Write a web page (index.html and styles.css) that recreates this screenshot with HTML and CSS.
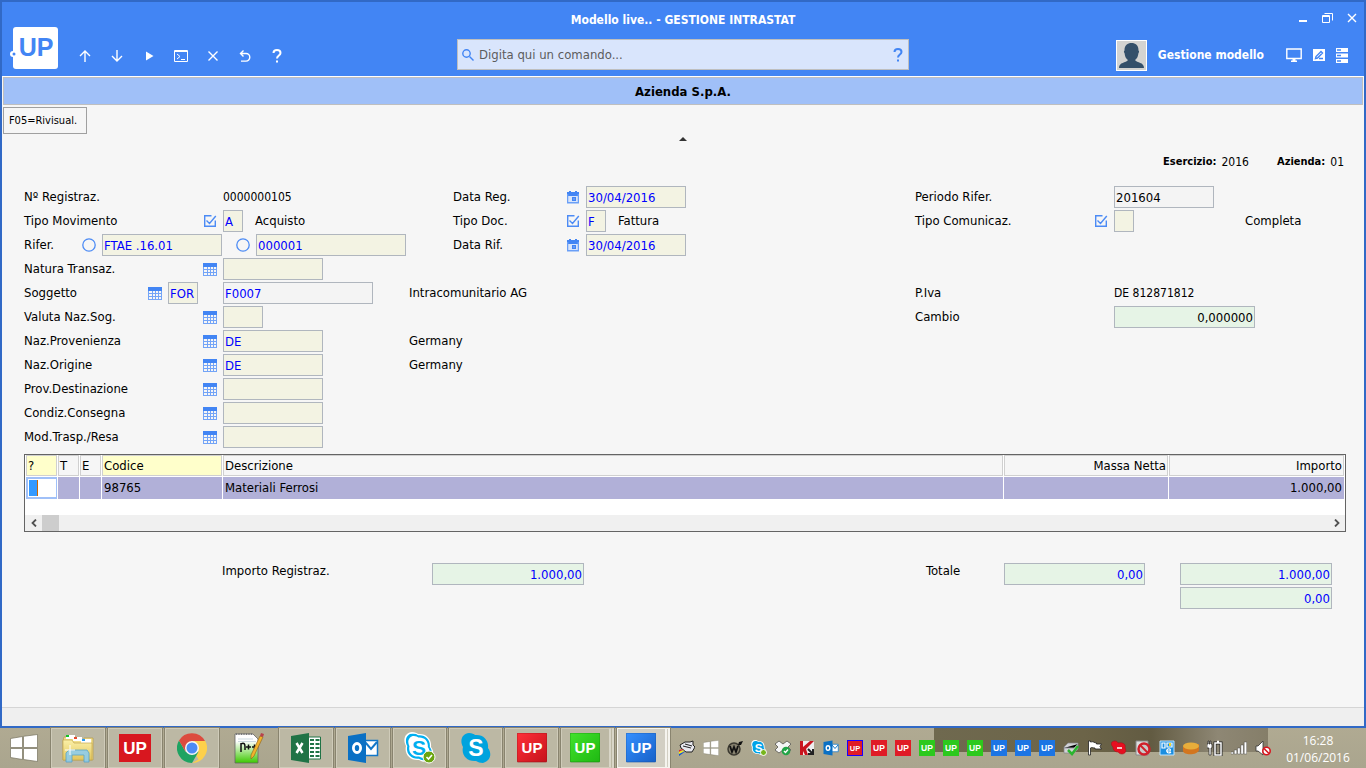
FILE: index.html
```html
<!DOCTYPE html>
<html lang="it">
<head>
<meta charset="utf-8">
<meta name="viewport" content="width=device-width, initial-scale=1">
<title>Modello live.. - GESTIONE INTRASTAT</title>
<link rel="stylesheet" href="styles.css">
</head>
<body>
<svg class="defs" aria-hidden="true">
  <symbol id="grid" viewBox="0 0 14 14"><path fill="#4285f4" d="M0 1h14v4H0z"/><path fill="#73a4f7" d="M0 5h14v9H0z"/><path fill="#f6f6f6" d="M1 5h3v2H1zM5 5h2v2H5zM8 5h2v2H8zM11 5h2v2h-2zM1 8h3v2H1zM5 8h2v2H5zM8 8h2v2H8zM11 8h2v2h-2zM1 11h3v2H1zM5 11h2v2H5zM8 11h2v2H8zM11 11h2v2h-2z"/></symbol>
  <symbol id="check" viewBox="0 0 14 14"><path fill="none" stroke="#4c8bf5" stroke-width="1.4" d="M8.500 1.700H1.700v10.600h10.600V6.500M3.500 6.500l3 3L12.800 2"/></symbol>
  <symbol id="ring" viewBox="0 0 14 14"><circle cx="7" cy="7" r="6.200" fill="none" stroke="#4c8bf5" stroke-width="1.300"/></symbol>
  <symbol id="cal" viewBox="0 0 14 14"><path fill="#4285f4" d="M1 2h2V1h2v1h4V1h2v1h2v4H1z"/><path fill="none" stroke="#6a9ff7" stroke-width="1.400" d="M1.700 4v8.800h10.600V4"/><path fill="#d8e5fb" d="M3 6h8v6H3z"/><path fill="#4285f4" d="M6 7h4v4H6z"/><path fill="#cfe0fb" d="M7.500 8.500h1v1h-1z"/></symbol>
  <symbol id="win" viewBox="0 0 28 28"><path fill="#fff" stroke="#77735f" stroke-width=".7" d="M.5 4.500 12.500 2.500v11H.5zM13.500 2.300 27.500.5v13h-14zM.5 14.500h12v11L.5 23.500zM13.500 14.500h14v13l-14-2z"/></symbol>
  <symbol id="outlook" viewBox="0 0 32 32"><path fill="#fff" stroke="#1277c8" stroke-width="1.500" d="M17 8.500h13.500v15H17z"/><path fill="none" stroke="#1277c8" stroke-width="2" d="m18 10 6 7 6-7"/><path fill="#0a70c4" d="M1 4 19 1v30L1 28z"/><ellipse cx="10" cy="16" rx="3.600" ry="4.500" fill="none" stroke="#fff" stroke-width="2.800"/></symbol>
  <symbol id="skypeShape" viewBox="0 0 30 30"><path d="M8 0c3 0 5 1 6 2 8-1 14 5 13 13 4 5 3 13-5 15-3 0-5-1-7-2C6 29 0 22 2 14-2 7 2 0 8 0z"/></symbol>
  <linearGradient id="redG" x2="1" y2="1"><stop stop-color="#ff3038"/><stop offset="1" stop-color="#c6121c"/></linearGradient>
  <linearGradient id="greenG" x2="1" y2="1"><stop stop-color="#42e32c"/><stop offset="1" stop-color="#1fb812"/></linearGradient>
  <linearGradient id="blueG" x2="1" y2="1"><stop stop-color="#3590ff"/><stop offset="1" stop-color="#1761c8"/></linearGradient>
  <linearGradient id="noteG" x2="0" y2="1"><stop offset=".25" stop-color="#fff"/><stop offset="1" stop-color="#3cc800"/></linearGradient>
  <linearGradient id="foldG" x2="0" y2="1"><stop stop-color="#fbf0a8"/><stop offset="1" stop-color="#e2c55c"/></linearGradient>
</svg>

<div class="window">
  <header class="header">
    <div class="header-left">
      <svg class="logo" viewBox="0 0 49 43" role="img" aria-label="UP"><rect x="3" y="1" width="45" height="42" rx="3"/><circle cx="3" cy="28" r="3"/><circle cx="4" cy="28" r="1.500"/><text x="26" y="30" class="logo-text">UP</text></svg>
      <nav class="tools">
        <button aria-label="Su"><svg width="12" height="12" viewBox="0 0 12 12"><path d="M6 12V1M1 6l5-5 5 5"/></svg></button>
        <button aria-label="Giù"><svg width="12" height="12" viewBox="0 0 12 12"><path d="M6 0v11M1 6l5 5 5-5"/></svg></button>
        <button aria-label="Esegui"><svg width="12" height="12" viewBox="0 0 12 12"><path class="solid" d="M3 1.500v9L10.500 6z"/></svg></button>
        <button aria-label="Console"><svg width="14" height="12" viewBox="0 0 14 12"><path class="thin" d="M.5.500h13v11H.5zM.5 1.500h13M3 4l3 2.500L3 9M7 9.500h4"/></svg></button>
        <button aria-label="Chiudi"><svg width="12" height="12" viewBox="0 0 12 12"><path d="m1.500 1.500 9 9M10.500 1.500l-9 9"/></svg></button>
        <button aria-label="Annulla"><svg width="12" height="12" viewBox="0 0 12 12"><path d="M4.500.5 1.500 3.500l3 3M1.500 3.500H7a3.800 3.800 0 0 1 0 7.600H2"/></svg></button>
        <button aria-label="Aiuto"><svg width="10" height="14" viewBox="0 0 10 14"><path class="bold" d="M1.500 4c0-4 7-4 7 0 0 2.500-3.500 2.500-3.500 5.500M5 11.500v2"/></svg></button>
      </nav>
    </div>
    <h1 class="title">Modello live.. - GESTIONE INTRASTAT</h1>
    <div class="win-controls">
      <button aria-label="Riduci"><svg width="10" height="10" viewBox="0 0 10 10"><path class="bold" d="M1 8h8"/></svg></button>
      <button aria-label="Ripristina"><svg width="11" height="10" viewBox="0 0 11 10"><path class="thin" d="M.5 2.500h7v7h-7zM.5 3.500h7M2.500.500h8v7"/></svg></button>
      <button aria-label="Chiudi finestra"><svg width="10" height="10" viewBox="0 0 10 10"><path d="m1 1 8 8M9 1 1 9"/></svg></button>
    </div>
    <div class="search">
      <svg width="12" height="12" viewBox="0 0 12 12"><circle cx="4.500" cy="4.500" r="3.700"/><path d="m7.500 7.500 4 4"/></svg>
      <input type="text" aria-label="Comando" placeholder="Digita qui un comando...">
      <button aria-label="Aiuto comandi"><svg width="10" height="14" viewBox="0 0 10 14"><path class="bold" d="M1.500 4c0-4 7-4 7 0 0 2.500-3.500 2.500-3.500 5.500M5 11.500v2"/></svg></button>
    </div>
    <div class="user">
      <svg class="avatar" viewBox="0 0 31 31"><path d="M0 0h31v31H0z"/><path d="M1 1h29v29H1z"/><path d="M12 20c-3-2-3-5-3.500-7-1-1-.5-2 0-2.500C8.500 5 11.500 3 15.500 3s7 2 7 7.500c.5.5 1 1.500 0 2.500-.5 2-.5 5-3.500 7 2 3 9 2 9 8H3c0-6 7-5 9-8z"/></svg>
      <span class="user-name">Gestione modello</span>
      <button aria-label="Schermo"><svg width="16" height="14" viewBox="0 0 16 14"><path d="M.8 1h14.400v9.500H.8z"/><path class="solid" d="M6.500 10.500h3v2h1.500v1.500H5v-1.500h1.500z"/></svg></button>
      <button aria-label="Modifica"><svg width="12" height="12" viewBox="0 0 12 12"><path class="solid" d="M0 0h12v12H0z"/><path class="ink" d="M2.500 9.500 3 7.500l5-5 1.500 1.500-5 5zM6 9.500h4"/></svg></button>
      <button aria-label="Server"><svg width="12" height="15" viewBox="0 0 12 15"><path class="solid" d="M0 0h12v4H0zM0 5.500h12v4H0zM0 11h12v4H0z"/><path class="ink" d="M1 2h4M1 7.500h4M1 13h4"/></svg></button>
    </div>
  </header>

  <main class="content">
    <div class="company">Azienda S.p.A.</div>
    <div class="commands"><button class="command">F05=Rivisual.</button></div>
    <div class="collapse"><svg width="8" height="4" viewBox="0 0 8 4"><path fill="#333" d="M4 0 8 4H0z"/></svg></div>
    <div class="meta"><b>Esercizio:</b><span>2016</span><b class="next">Azienda:</b><span>01</span></div>

    <form class="form">
      <div class="col">
        <div class="row"><div class="lead"><span class="label">Nº Registraz.</span></div><output>0000000105</output></div>
        <div class="row"><div class="lead"><label for="mov">Tipo Movimento</label><svg class="ic"><use href="#check"/></svg></div><input id="mov" class="w20" value="A"><span class="desc">Acquisto</span></div>
        <div class="row"><div class="lead flush"><label for="rif1">Rifer.</label><svg class="ic"><use href="#ring"/></svg><input id="rif1" class="w120" value="FTAE .16.01"></div><svg class="ic second"><use href="#ring"/></svg><input class="w150" aria-label="Numero riferimento" value="000001"></div>
        <div class="row"><div class="lead"><label for="nat">Natura Transaz.</label><svg class="ic"><use href="#grid"/></svg></div><input id="nat" class="w100"></div>
        <div class="row"><div class="lead wide"><label for="sogt">Soggetto</label><svg class="ic"><use href="#grid"/></svg><input id="sogt" class="w30" value="FOR"></div><div class="main"><input class="w150 plain" aria-label="Codice soggetto" value="F0007"></div><span>Intracomunitario AG</span></div>
        <div class="row"><div class="lead"><label for="val">Valuta Naz.Sog.</label><svg class="ic"><use href="#grid"/></svg></div><input id="val" class="w40"></div>
        <div class="row"><div class="lead"><label for="prov">Naz.Provenienza</label><svg class="ic"><use href="#grid"/></svg></div><div class="main"><input id="prov" class="w100" value="DE"></div><span>Germany</span></div>
        <div class="row"><div class="lead"><label for="orig">Naz.Origine</label><svg class="ic"><use href="#grid"/></svg></div><div class="main"><input id="orig" class="w100" value="DE"></div><span>Germany</span></div>
        <div class="row"><div class="lead"><label for="dest">Prov.Destinazione</label><svg class="ic"><use href="#grid"/></svg></div><input id="dest" class="w100"></div>
        <div class="row"><div class="lead"><label for="cons">Condiz.Consegna</label><svg class="ic"><use href="#grid"/></svg></div><input id="cons" class="w100"></div>
        <div class="row"><div class="lead"><label for="resa">Mod.Trasp./Resa</label><svg class="ic"><use href="#grid"/></svg></div><input id="resa" class="w100"></div>
      </div>
      <div class="col mid">
        <div class="row"><div class="lead"><label for="dreg">Data Reg.</label><svg class="ic"><use href="#cal"/></svg></div><input id="dreg" class="w100" value="30/04/2016"></div>
        <div class="row"><div class="lead"><label for="tdoc">Tipo Doc.</label><svg class="ic"><use href="#check"/></svg></div><input id="tdoc" class="w20" value="F"><span class="desc">Fattura</span></div>
        <div class="row"><div class="lead"><label for="drif">Data Rif.</label><svg class="ic"><use href="#cal"/></svg></div><input id="drif" class="w100" value="30/04/2016"></div>
      </div>
      <div class="col">
        <div class="row"><div class="lead"><label for="per">Periodo Rifer.</label></div><input id="per" class="w100 plain black" value="201604"></div>
        <div class="row"><div class="lead"><label for="com">Tipo Comunicaz.</label><svg class="ic"><use href="#check"/></svg></div><div class="main short"><input id="com" class="w20"></div><span>Completa</span></div>
        <div class="row"></div>
        <div class="row"></div>
        <div class="row"><div class="lead"><span class="label">P.Iva</span></div><output>DE 812871812</output></div>
        <div class="row"><div class="lead"><label for="camb">Cambio</label></div><input id="camb" class="w141 num black" value="0,000000"></div>
      </div>
    </form>

    <div class="grid-box">
      <table class="lines">
        <colgroup><col class="c-q"><col class="c-s"><col class="c-s"><col class="c-cod"><col><col class="c-mas"><col class="c-imp"></colgroup>
        <thead><tr><th class="key">?</th><th>T</th><th>E</th><th class="key">Codice</th><th>Descrizione</th><th class="r">Massa Netta</th><th class="r">Importo</th></tr></thead>
        <tbody><tr><td class="edit"><input aria-label="Selezione riga"></td><td></td><td></td><td>98765</td><td>Materiali Ferrosi</td><td></td><td class="r">1.000,00</td></tr></tbody>
      </table>
      <div class="scroll">
        <button aria-label="Scorri a sinistra"><svg width="6" height="8" viewBox="0 0 6 8"><path d="M5 .5 1.500 4 5 7.500"/></svg></button>
        <span class="thumb"></span>
        <button aria-label="Scorri a destra"><svg width="6" height="8" viewBox="0 0 6 8"><path d="M1 .5 4.500 4 1 7.500"/></svg></button>
      </div>
    </div>

    <div class="totals">
      <label class="t-reg" for="treg">Importo Registraz.</label><input id="treg" class="w152 num" value="1.000,00">
      <label class="t-tot" for="ttot">Totale</label><input id="ttot" class="w141 num" value="0,00">
      <div class="stack"><input class="w152 num" aria-label="Totale importo" value="1.000,00"><input class="w152 num" aria-label="Differenza" value="0,00"></div>
    </div>
  </main>
  <footer class="status"></footer>
</div>

<div class="taskbar">
  <div class="apps">
    <button class="start" aria-label="Start"><svg width="28" height="28"><use href="#win"/></svg></button>
    <button class="app" aria-label="Esplora file"><svg width="32" height="30" viewBox="0 0 32 30"><path fill="#f2df8c" stroke="#b79b45" stroke-width=".7" d="M2 4h12v3h8V5h9v22H1V8z"/><path fill="#fff" d="M4 2h9v4H4zM11 4h9v4h-9zM19 6h10v4H19z"/><path fill="#12c426" d="M4 2h3v2H4z"/><path fill="#e44b2c" d="M12 4h3v2h-3z"/><path fill="#2b9cf0" d="M20 6h3v2h-3z"/><path fill="url(#foldG)" stroke="#c3a74e" stroke-width=".7" d="M1 7h9l2 3h18v17H1z"/><path fill="#8fcdeb" stroke="#4b9fcb" stroke-width=".8" d="M7 17h18l2 3v9h-5v-7H10v7H4v-9z" opacity=".9"/><path stroke="#fff" d="M8 12v10M3 17h10"/></svg></button>
    <button class="app" aria-label="UP"><svg width="32" height="28" viewBox="0 0 32 28"><path fill="#d8171f" d="M0 0h32v28H0z"/><text class="up-big" x="16" y="20">UP</text></svg></button>
    <button class="app" aria-label="Chrome"><svg width="30" height="30" viewBox="0 0 30 30"><path fill="#fdd04b" d="M15 15 21.500 26.500 15 30a15 15 0 0 0 13-22.500H15z"/><path fill="#1ea362" d="M15 15 8.500 18.700 2 7.500A15 15 0 0 0 15 30l6.500-11.300z"/><path fill="#dc4b3e" d="M15 8h13A15 15 0 0 0 2 7.500l6.500 11z"/><circle cx="15" cy="15" r="7" fill="#f6f6f4"/><circle cx="15" cy="15" r="5.500" fill="#4b8bf4"/></svg></button>
    <button class="app idle" aria-label="Notepad++"><svg width="30" height="32" viewBox="0 0 30 32"><path fill="url(#noteG)" stroke="#666" stroke-width=".8" d="M1 2h18l5 5v24H1z"/><path stroke="#777" stroke-dasharray="1 1.500" stroke-width="2" d="M2 2h17"/><path stroke="#a9bfca" stroke-width=".6" d="M4 7h15M4 9.500h18"/><path fill="none" stroke="#111" stroke-width="1.500" d="M7 20v-9M7 12c3-2 4 0 4 3v3M12 15h5M14.500 12.500v5M18 15h5M20.500 12.500v5"/><path fill="#f2b22c" stroke="#8b6219" stroke-width=".6" d="m26 4 3 1-9 19-3 3v-4z"/><path fill="#b8424c" d="m26 4 1-3 3 1-1 3z"/></svg></button>
    <button class="app" aria-label="Excel"><svg width="30" height="30" viewBox="0 0 30 30"><path fill="#fff" stroke="#207346" d="M16 4h13.500v22H16z"/><path stroke="#207346" stroke-width="2" stroke-dasharray="4 1.500" d="M19 7h10M19 11h10M19 15h10M19 19h10M19 23h10"/><path fill="#207346" d="M0 3 18 0v30L0 27z"/><path stroke="#fff" stroke-width="2.500" d="m5.500 10 6 10M11.500 10l-6 10"/></svg></button>
    <button class="app" aria-label="Outlook"><svg width="32" height="32"><use href="#outlook"/></svg></button>
    <button class="app tight" aria-label="Skype for Business"><svg width="32" height="32" viewBox="0 0 32 32"><g fill="#fff"><use href="#skypeShape" width="30" height="30"/></g><g fill="#00aff0"><use href="#skypeShape" x="1.500" y="1.500" width="27" height="27"/></g><g fill="#fff"><use href="#skypeShape" x="4" y="4" width="22" height="22"/></g><text class="skype-s blue" x="15" y="23">S</text><circle cx="25" cy="25" r="6" fill="#6ba510" stroke="#fff"/><path fill="none" stroke="#fff" stroke-width="1.600" d="m22.500 25 2 2 3.500-4"/></svg></button>
    <button class="app tight" aria-label="Skype"><svg width="30" height="30" viewBox="0 0 30 30"><g fill="#00a3de"><use href="#skypeShape"/></g><text class="skype-s" x="15" y="23">S</text></svg></button>
    <button class="app tight" aria-label="UP rosso"><svg width="30" height="30" viewBox="0 0 30 30"><rect width="30" height="29" rx="1" fill="url(#redG)" stroke="#97111a" stroke-width=".6"/><text class="up-mid" x="15" y="20">UP</text></svg></button>
    <button class="app tight multi" aria-label="UP verde"><svg width="30" height="30" viewBox="0 0 30 30"><rect width="30" height="29" rx="1" fill="url(#greenG)" stroke="#16850c" stroke-width=".6"/><text class="up-mid" x="15" y="20">UP</text></svg></button>
    <button class="app tight multi active" aria-label="UP blu"><svg width="30" height="30" viewBox="0 0 30 30"><rect width="30" height="29" rx="1" fill="url(#blueG)" stroke="#1452a5" stroke-width=".6"/><text class="up-mid" x="15" y="20">UP</text></svg></button>
  </div>
  <div class="tray">
    <svg viewBox="0 0 16 16"><path fill="#e8e8ee" stroke="#222" d="M1 5 6 2h5l3-1v4l2 2-3 5H7L2 8z"/><path stroke="#222" d="m4 6 8 2M6 4l7 2"/><path fill="#e22" d="m5 9-5 3v-2z"/><path fill="#ff0" d="m6 10-6 4v-2z"/><path fill="#15c" d="m7 11-7 5v-2z"/></svg>
    <svg viewBox="0 0 28 28"><use href="#win"/></svg>
    <svg viewBox="0 0 16 16"><circle cx="7" cy="9" r="6" fill="#87826f" stroke="#3b3930" stroke-width="1.500"/><path fill="none" stroke="#111" stroke-width="1.800" d="m3 6 2 6 2-5 2 5 2-6"/><path fill="#111" d="m11 5 1-3 4-1-2 4z"/></svg>
    <svg viewBox="0 0 32 32"><g fill="#fff"><use href="#skypeShape" width="30" height="30"/></g><g fill="#00a3e8"><use href="#skypeShape" x="2" y="2" width="26" height="26"/></g><text class="skype-s" x="15" y="23">S</text><circle cx="25" cy="25" r="6" fill="#77b51c" stroke="#fff" stroke-width="2"/></svg>
    <svg viewBox="0 0 16 16"><path fill="#f6f6f6" stroke="#55564f" stroke-width=".8" d="m4 1 4 3 4-3 4 3-3 3 3 3-4 3-4-3-4 3-4-3 3-3-3-3z"/><circle cx="11" cy="11" r="4.300" fill="#22a447"/><path fill="none" stroke="#fff" stroke-width="1.400" d="m9 11 1.500 1.500L13 9.500"/></svg>
    <svg viewBox="0 0 16 16"><path fill="#eee" d="M1 1h14v14H1z"/><path fill="#c9151e" d="M1 1h3v6l7-6h4L7 9l2 6H6L4 11v4H1z"/><path fill="none" stroke="#222" stroke-width="2" d="m9 9 5 5M14 9v5H9"/></svg>
    <svg viewBox="0 0 32 32"><use href="#outlook"/></svg>
    <svg class="up red framed" viewBox="0 0 15 15"><rect width="15" height="15"/><text class="up-small" x="7.500" y="10.500">UP</text></svg>
    <svg class="up red" viewBox="0 0 15 15"><rect width="15" height="15"/><text class="up-small" x="7.500" y="10.500">UP</text></svg>
    <svg class="up red" viewBox="0 0 15 15"><rect width="15" height="15"/><text class="up-small" x="7.500" y="10.500">UP</text></svg>
    <svg class="up green" viewBox="0 0 15 15"><rect width="15" height="15"/><text class="up-small" x="7.500" y="10.500">UP</text></svg>
    <svg class="up green" viewBox="0 0 15 15"><rect width="15" height="15"/><text class="up-small" x="7.500" y="10.500">UP</text></svg>
    <svg class="up green" viewBox="0 0 15 15"><rect width="15" height="15"/><text class="up-small" x="7.500" y="10.500">UP</text></svg>
    <svg class="up blue" viewBox="0 0 15 15"><rect width="15" height="15"/><text class="up-small" x="7.500" y="10.500">UP</text></svg>
    <svg class="up blue" viewBox="0 0 15 15"><rect width="15" height="15"/><text class="up-small" x="7.500" y="10.500">UP</text></svg>
    <svg class="up blue" viewBox="0 0 15 15"><rect width="15" height="15"/><text class="up-small" x="7.500" y="10.500">UP</text></svg>
    <svg viewBox="0 0 16 16"><path fill="#d2d2d5" stroke="#84858a" stroke-width=".7" d="m1 7 4-4h10v6l-4 4H1z"/><path stroke="#9798a0" d="M1 8h10l4-4"/><path fill="none" stroke="#2bb52e" stroke-width="2.500" d="m5 10 4 4 6-8"/></svg>
    <svg viewBox="0 0 16 16"><path fill="#fff" stroke="#222" stroke-width=".8" d="M1.500 1h2v1c3-1 4 1 6 1v1h5l-1.500 2.500L14.500 9H8V8C6 8 5 7 3.500 8v7h-2z"/></svg>
    <svg viewBox="0 0 16 16"><path fill="#e60f20" stroke="#a90c17" stroke-width=".5" d="M1 2c3-2 5-1 6 1 6-1 8 2 7 5 2 3 0 6-3 6-2 0-3-1-4-2-4 0-5-3-5-5C0 5 0 3 1 2z"/><path stroke="#fff" stroke-width="1.500" d="M6 8h5"/></svg>
    <svg viewBox="0 0 16 16"><path fill="#dcdedf" stroke="#888" d="M1 1h12v14H1z"/><circle cx="9" cy="9" r="5.500" fill="#c9c9c9" stroke="#d0202b" stroke-width="2.500"/><path stroke="#d0202b" stroke-width="2" d="m5 5 8 8"/></svg>
    <svg viewBox="0 0 16 16"><path fill="#1b8ee0" stroke="#bfe5ff" d="M1 1h14v14H1z"/><path fill="none" stroke="#fff" stroke-width="1.200" d="M3 3h3v5H3zM8 3h5v4H8zM7 11h4c2-3-4-3-3 0 0 3 3 2 4 1"/><path fill="#f3d62c" d="M10 3h2v3h-2z"/></svg>
    <svg viewBox="0 0 16 16"><path fill="#d3761f" d="M0 6v5c1 5 15 4 16-1V4z"/><ellipse cx="8" cy="6" rx="8" ry="3.500" fill="#e7ad3b"/></svg>
    <svg viewBox="0 0 16 16"><path fill="#fff" stroke="#222" stroke-width=".7" d="M1 1h1v3h1V1h1v3h1v4H4v7H2V8H0V4h1z"/><path fill="none" stroke="#222" stroke-width="3" d="M8 3h6v12H8z"/><path fill="none" stroke="#fff" stroke-width="1.500" d="M8 3h6v12H8zM10 1.500h2"/></svg>
    <svg viewBox="0 0 16 16"><path fill="#fff" stroke="#333" stroke-width=".4" d="M0 12h2.500v2H0zM3.300 10h2.500v4H3.300zM6.600 8h2.500v6H6.600zM9.900 5h2.500v9H9.900zM13.200 2h2.500v12h-2.500z"/></svg>
    <svg viewBox="0 0 16 16"><path fill="#fff" stroke="#333" stroke-width=".8" d="M1 6h2l5-5v14l-5-4H1z"/><circle cx="11.500" cy="11" r="3.700" fill="#fff" stroke="#d7151e" stroke-width="1.600"/><path stroke="#d7151e" stroke-width="1.600" d="m9 8.500 5 5"/></svg>
  </div>
  <div class="clock"><span>16:28</span><span>01/06/2016</span></div>
</div>
</body>
</html>
```
FILE: styles.css
```css
* { box-sizing: border-box; }

body {
  margin: 0;
  min-height: 100vh;
  display: flex;
  flex-direction: column;
  font-family: "DejaVu Sans Condensed", "DejaVu Sans", "Noto Sans", sans-serif;
  font-size: 13px;
  line-height: 16px;
  color: #000;
  background: #f6f6f6;
}

button, input { font: inherit; color: inherit; }
button { padding: 0; border: 0; background: none; display: flex; align-items: center; justify-content: center; }
.defs { position: absolute; width: 0; height: 0; }

.window {
  flex: 1;
  display: flex;
  flex-direction: column;
  border: 2px solid #3169c6;
  background: #f6f6f6;
}

/* Header */
.header {
  display: grid;
  grid-template-columns: 1fr 452px 1fr;
  grid-template-rows: 36px 38px;
  background: #4285f4;
  color: #fff;
}
.header svg path, .header svg circle { stroke: #fff; fill: none; stroke-width: 1.4; }
.header svg path.solid { fill: #fff; stroke: none; }
.header svg path.ink { stroke: #4285f4; }
.header svg path.thin { stroke-width: 1; }
.header svg path.bold { stroke-width: 2; }
.header-left { grid-row: 1 / 3; display: flex; align-items: flex-end; gap: 10px; padding: 0 8px 7px; }
.header .logo { width: 49px; height: 43px; }
.header .logo rect, .header .logo circle { stroke: none; fill: #fff; }
.header .logo circle + circle { fill: #4285f4; }
.logo-text { font: bold 25px "Liberation Sans", sans-serif; fill: #4285f4; text-anchor: middle; }
.tools { display: flex; }
.tools button { width: 32px; height: 26px; }
.title { margin: 0; text-align: center; font-size: 12px; line-height: 36px; font-weight: bold; white-space: nowrap; }
.win-controls { display: flex; justify-content: flex-end; align-items: center; gap: 14px; padding: 0 7px 4px 0; }
.search {
  height: 31px;
  display: flex;
  align-items: center;
  gap: 5px;
  padding: 0 5px 0 4px;
  margin-top: 1px;
  background: #d9e5fc;
  border: 1px solid #bfbfbf;
}
.header .search svg path, .header .search svg circle { stroke: #4285f4; }
.search input { flex: 1; min-width: 0; border: 0; padding: 0; background: none; outline: 0; color: #555; }
.search input::placeholder { color: #5c5c5c; opacity: 1; }
.user { display: flex; align-items: center; justify-content: flex-end; padding-right: 16px; padding-bottom: 4px; }
.avatar { width: 31px; height: 31px; margin-right: 11px; }
.header .avatar path { fill: #34506a; stroke: none; }
.header .avatar path:nth-child(1) { fill: #fff; }
.header .avatar path:nth-child(2) { fill: #d3d3d1; }
.user-name { font-size: 12px; font-weight: bold; margin-right: 22px; white-space: nowrap; }
.user button + button { margin-left: 11px; }

/* Content */
.content { flex: 1; border-top: 1px solid #fff; }
.company {
  height: 28px;
  line-height: 27px;
  text-align: center;
  font-weight: bold;
  background: #a0c0f8;
  border: 1px solid #bfbfbf;
  margin: 0 1px;
}
.commands { padding: 2px 1px 0; }
.command { height: 27px; width: 84px; padding-right: 4px; font-size: 11px; border: 1px solid #a0a0a0; background: #f6f6f6; white-space: nowrap; }
.collapse { display: flex; justify-content: center; padding: 3px 0 8px; }
.meta { display: flex; justify-content: flex-end; gap: 5px; height: 26px; align-items: center; padding-right: 20px; font-size: 12px; }
.meta b { font-size: 11px; }
.meta .next { margin-left: 23px; }

.form { display: grid; grid-template-columns: minmax(0, 429fr) minmax(0, 462fr) minmax(0, 431fr); padding: 10px 18px 0 22px; }
.row { display: flex; align-items: center; height: 24px; white-space: nowrap; }
.lead { flex: none; width: 199px; display: flex; align-items: center; gap: 6px; padding-right: 6px; }
.lead label, .lead .label { margin-right: auto; }
.lead.flush { padding-right: 1px; }
.lead.wide { padding-right: 25px; }
.mid .lead { width: 133px; }
.form output { font-size: 12px; }
.ic { flex: none; width: 14px; height: 14px; }
.ic.second { margin: 0 6px 0 13px; }
.main { flex: none; width: 186px; display: flex; }
.main.short { width: 131px; }
.desc { margin-left: 12px; }

.form input, .totals input {
  flex: none;
  height: 22px;
  padding: 0 1px;
  border: 1px solid #b0b6be;
  border-radius: 0;
  background: #f3f3e3;
  color: #00f;
  outline: 0;
}
.form input.plain { background: #f4f4f4; }
.form input.black { color: #000; }
.form input.num, .totals input.num { background: #e6f4e6; text-align: right; }
.w20 { width: 20px; }
.w30 { width: 30px; }
.w40 { width: 40px; }
.w100 { width: 100px; }
.w120 { width: 120px; }
.w141 { width: 141px; }
.w150 { width: 150px; }
.w152 { width: 152px; }

/* Lines table */
.grid-box { margin: 5px 18px 0 22px; border: 1px solid #646464; background: #fff; }
.lines { width: 100%; table-layout: fixed; border-collapse: separate; border-spacing: 1px 0; }
.lines th, .lines td { padding: 0 1px; text-align: left; font-weight: normal; white-space: nowrap; }
.lines th { height: 21px; background: #f6f6f6; border: 1px solid #d0d0d0; }
.lines th.key { background: #ffffcb; }
.lines td { height: 23px; background: #b1b0d8; padding: 0 2px; border-top: 1px solid #fff; }
.lines .r { text-align: right; }
.lines td.edit { padding: 0; background: #a0c0f8; }
.edit input {
  display: block;
  width: 28px;
  height: 18px;
  margin: 0 auto;
  padding: 0;
  border: 1px solid #fff;
  outline: 0;
  background: linear-gradient(90deg, #3399ff 8px, #cc6600 8px, #cc6600 9px, #fff 9px);
}
.c-q { width: 31px; }
.c-s { width: 21px; }
.c-cod { width: 120px; }
.c-mas { width: 164px; }
.c-imp { width: 175px; }
.scroll { display: flex; height: 16px; margin-top: 16px; background: #f0f0f0; }
.scroll button { width: 17px; }
.scroll button:last-child { margin-left: auto; }
.scroll path { fill: none; stroke: #505050; stroke-width: 1.8; }
.thumb { width: 17px; background: #cdcdcd; }

.totals { display: flex; align-items: flex-start; padding: 31px 32px 0 220px; }
.t-reg { width: 210px; }
.t-tot { width: 78px; margin-left: auto; }
.stack { display: flex; flex-direction: column; gap: 2px; margin-left: 35px; }

.status { height: 19px; background: #efefef; border-top: 1px solid #d5d5d5; }

/* Taskbar */
.taskbar {
  flex: none;
  display: flex;
  height: 40px;
  background: linear-gradient(#b0aa92, #aaa58e);
}
.apps { display: flex; gap: 3px; }
.start { width: 48px; }
.app { width: 54px; height: 40px; border: 1px solid #cfcbb9; background: #bcb8a4; box-shadow: 0 0 0 1px #89846f; }
.app.tight { width: 53px; }
.app.idle { border-color: transparent; background: none; box-shadow: none; }
.app.multi { padding-right: 2px; border-right: 5px double #d9d6c8; }
.app.active { background: #d2cfc3; border-color: #f5f4ee; }
.app svg { flex: none; }
.up-big, .up-mid, .up-small, .skype-s { font-family: "Liberation Sans", sans-serif; font-weight: bold; fill: #fff; text-anchor: middle; }
.up-big { font-size: 17px; }
.up-mid { font-size: 15px; }
.up-small { font-size: 8px; }
.skype-s { font-size: 23px; }
.skype-s.blue { fill: #00aff0; font-size: 21px; }
.tray {
  margin-left: auto;
  display: flex;
  align-items: center;
  gap: 8px;
  background: linear-gradient(90deg, #6f694f, #6c6448 45%, #625b42 65%, #8e8774 85%, #857e69) right top / 334px 24px no-repeat;
}
.tray svg { width: 16px; height: 16px; }
.tray svg:last-child { margin-right: -3px; }
.up.red rect { fill: #e01b26; }
.up.green rect { fill: #2cc91d; }
.up.blue rect { fill: #1c75e4; }
.up.framed { border: 1px solid #1a00ff; }
.clock { width: 98px; display: flex; flex-direction: column; align-items: center; padding: 4px 0 0 2px; color: #fff; font-family: "Open Sans", sans-serif; font-size: 12px; line-height: 17px; }
```
